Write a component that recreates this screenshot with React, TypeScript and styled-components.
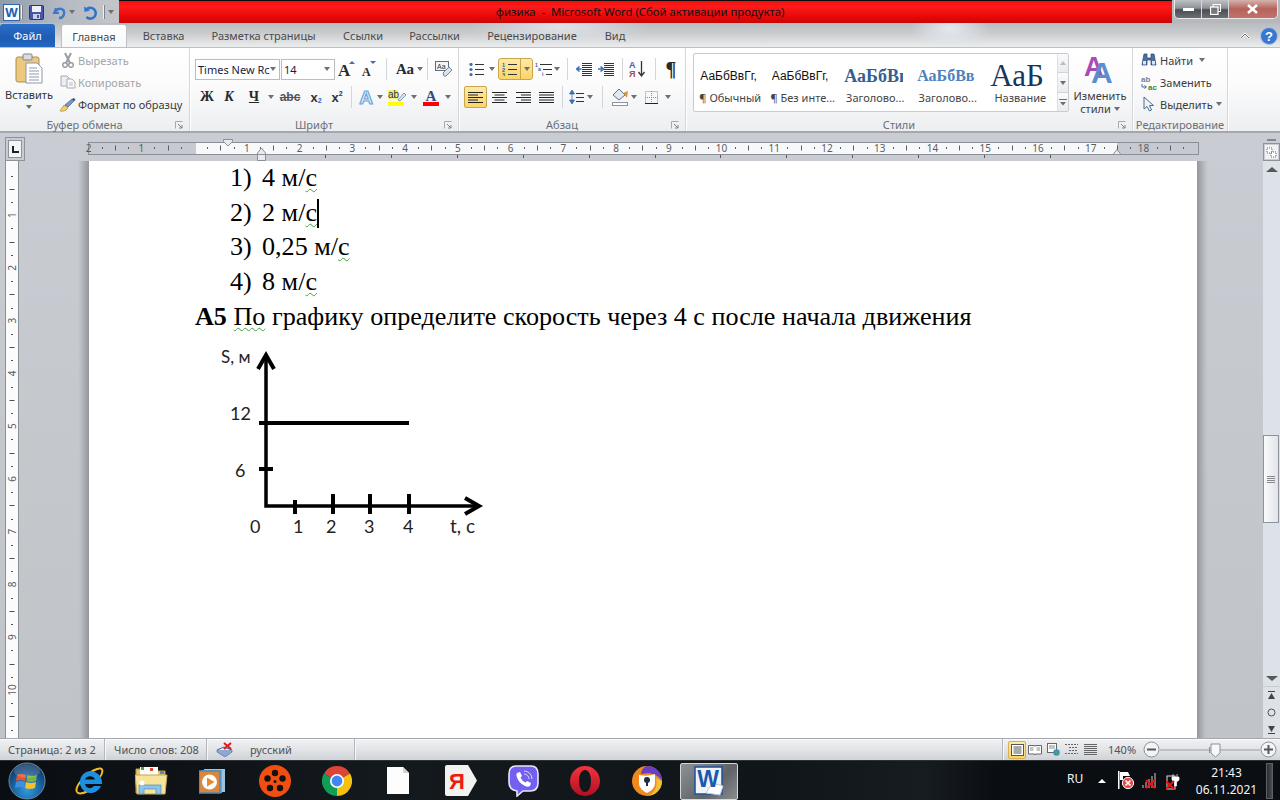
import React from 'react';
import styled, { createGlobalStyle } from 'styled-components';

const Global = createGlobalStyle`
  html, body { margin: 0; padding: 0; width: 1280px; height: 800px; overflow: hidden; background: #c8ccd2; }
  * { box-sizing: border-box; }
  #root { width: 1280px; height: 800px; }
`;

const UI = `"Noto Sans", "Open Sans", sans-serif`;

const Window = styled.div`
  width: 1280px; height: 800px; display: flex; flex-direction: column; overflow: hidden;
  font-family: ${UI}; font-size: 11px; color: #3b3b3b;
`;

/* ---------- title ---------- */
const TitleBar = styled.div`
  height: 23px; display: flex; flex: none;
  background: linear-gradient(90deg, #8f9cad 0, #b4bac2 60px, #c4c6c9 119px, #b5b7ba 100%);
`;
const Qat = styled.div`width: 119px; display: flex; align-items: center; padding: 1px 0 0 2px;`;
const QatCell = styled.div<{ $w: number }>`width: ${p => p.$w}px; display: flex; justify-content: center; align-items: center;`;
const QatSep = styled.div`width: 1px; height: 14px; background: #eef0f2; box-shadow: 1px 0 #7c828a;`;
const RedBand = styled.div`
  width: 1053px; height: 23px; border-top: 1px solid #0b0b0b;
  background: linear-gradient(#f40f0f, #ff1a1a 25%, #e80808 70%, #c90606);
  color: #111; font-size: 11.3px; display: flex; align-items: center; justify-content: center; padding: 0 11px 2px 0;
  white-space: pre;
`;
const WinControls = styled.div`
  margin-left: 2px; width: 104px; height: 19px; display: flex; border: 1px solid #e8e9ea; border-top: 0;
  border-radius: 0 0 5px 5px; overflow: hidden;
`;
const WinBtn = styled.div<{ $w: number; $close?: boolean }>`
  width: ${p => p.$w}px; display: flex; align-items: center; justify-content: center;
  border-right: 1px solid #d8d9da;
  background: ${p => p.$close
    ? 'linear-gradient(#d4b3ad, #b5625a 50%, #c3726a)'
    : 'linear-gradient(#bfc2c5, #8d9195 45%, #4a4e52 55%, #6c7074)'};
  &:last-child { border-right: 0; }
`;

/* ---------- tabs ---------- */
const TabRow = styled.div`
  height: 24px; flex: none; display: flex; align-items: stretch; padding-top: 1px; color: #4a4a4a;
  background:
    radial-gradient(ellipse 40px 22px at 950px 6px, #e4e9f0, transparent),
    radial-gradient(ellipse 90px 20px at 560px 4px, #dfe2e8, transparent),
    linear-gradient(#b9bcbf, #c8cacc 40%, #eceded);
`;
const FileTab = styled.div`
  width: 55px; background: linear-gradient(#2a6ec8, #1d5cb4 60%, #2368c0); color: #fff;
  border-radius: 3px 3px 0 0; display: flex; align-items: center; justify-content: center;
`;
const ActiveTab = styled.div`
  width: 66px; margin-left: 6px; background: linear-gradient(#fff, #f7f8f9); border: 1px solid #bcc0c4; border-bottom: 0;
  border-radius: 3px 3px 0 0; display: flex; align-items: center; justify-content: center;
`;
const Tab = styled.div<{ $w: number }>`width: ${p => p.$w}px; display: flex; align-items: center; justify-content: center;`;
const TabEnd = styled.div`margin-left: auto; display: flex; align-items: center; gap: 10px; padding-right: 2px;`;

/* ---------- ribbon ---------- */
const Ribbon = styled.div`
  height: 86px; flex: none; display: flex; border-top: 1px solid #bcc0c4; border-bottom: 2px solid #a4a8ad;
  background: linear-gradient(#fff, #fbfbfc 45%, #eceef0);
`;
const Group = styled.div<{ $w: number }>`
  width: ${p => p.$w}px; height: 83px; border-right: 1px solid #d4d6d9; display: flex; flex-direction: column;
  box-shadow: 1px 0 #fff;
`;
const GroupBody = styled.div<{ $top: number; $left?: number }>`
  height: 71px; padding-top: ${p => p.$top}px; padding-left: ${p => p.$left || 0}px; display: flex;
`;
const GroupLabel = styled.div`height: 12px; display: flex; align-items: center; color: #6a7078; margin-top: 0;`;
const GroupTitle = styled.div`flex: 1; text-align: center; line-height: 12px; white-space: nowrap;`;
const Launcher = styled.svg`width: 8px; height: 8px; margin: 0 6px; flex: none;`;

const PasteCol = styled.div`width: 58px; display: flex; flex-direction: column; align-items: center; padding-top: 4px;`;
const PasteText = styled.div`line-height: 14px; margin: 4px 0 3px; color: #333;`;
const ClipCol = styled.div`display: flex; flex-direction: column;`;
const ActionRow = styled.div<{ $off?: boolean }>`
  height: 22px; display: flex; align-items: center; white-space: nowrap;
  color: ${p => p.$off ? '#a3a6a9' : '#3b3b3b'};
`;
const ActionIcon = styled.div<{ $w: number }>`width: ${p => p.$w}px; display: flex; justify-content: center; flex: none;`;
const Caret = styled.span<{ $up?: boolean; $faint?: boolean }>`
  display: inline-block; width: 0; height: 0; border: 3px solid transparent; flex: none;
  ${p => p.$up ? 'border-bottom: 4px solid #6c6f73; border-top: 0;' : 'border-top: 4px solid #6c6f73; border-bottom: 0;'}
  opacity: ${p => p.$faint ? .4 : 1};
`;
const RowStack = styled.div`display: flex; flex-direction: column; gap: 6px;`;
const ToolRow = styled.div<{ $left?: number }>`height: 22px; display: flex; align-items: center; margin-left: ${p => p.$left || 0}px;`;
const Tool = styled.div<{ $w: number; $on?: boolean }>`
  width: ${p => p.$w}px; height: 22px; display: flex; align-items: center; justify-content: center; flex: none;
  ${p => p.$on ? 'background: linear-gradient(#fde9a8, #fbd568); border: 1px solid #c9a54b; border-radius: 2px;' : ''}
`;
const ToolSep = styled.div<{ $w: number }>`
  width: ${p => p.$w}px; height: 22px; flex: none; display: flex; justify-content: center;
  &::after { content: ''; width: 1px; background: #d3d5d8; }
`;
const SplitTool = styled.div`
  width: 35px; height: 22px; display: flex; border: 1px solid #c9a54b; border-radius: 3px; flex: none; margin-left: 2px;
  background: linear-gradient(#fde9a8, #fbd568);
`;
const SplitMain = styled.div`width: 22px; display: flex; align-items: center; justify-content: center; border-right: 1px solid #c9a54b;`;
const SplitArrow = styled.div`flex: 1; display: flex; align-items: center; justify-content: center;`;

const FontBox = styled.div<{ $w: number }>`
  width: ${p => p.$w}px; height: 21px; border: 1px solid #b9bdc2; background: #fff; display: flex; align-items: center;
  justify-content: space-between; padding: 0 4px 0 2px; flex: none; margin-right: 1px; color: #1c1c3c; white-space: nowrap;
`;
const Serif = styled.span<{ $s: number; $i?: boolean; $u?: boolean; $c?: string; $w?: number }>`
  font-family: "Liberation Serif", serif; font-size: ${p => p.$s}px; font-weight: ${p => p.$w ?? 700}; line-height: 1;
  font-style: ${p => p.$i ? 'italic' : 'normal'}; color: ${p => p.$c || '#2a2a2a'};
  text-decoration: ${p => p.$u ? 'underline' : 'none'};
`;
const Mini = styled.span`
  font-size: 13px; font-weight: 700; color: #333; font-family: "Liberation Sans", sans-serif; display: inline-flex; align-items: baseline;
  line-height: 1;
`;
const MiniIdx = styled.span<{ $up?: boolean }>`font-size: 7px; color: ${p => p.$up ? '#333' : '#3566b0'}; position: relative; top: ${p => p.$up ? -6 : 1}px;`;
const Strike = styled.span`font-size: 12px; color: #555; text-decoration: line-through; font-family: "Liberation Sans", sans-serif; font-weight: 700;`;

const Gallery = styled.div`
  margin-left: 7px; width: 376px; height: 59px; display: flex; border: 1px solid #c8ccd1; border-radius: 2px; background: #fff; flex: none;
`;
const GalleryItem = styled.div`width: 72.5px; display: flex; flex-direction: column; align-items: center; padding-top: 6px;`;
const Sample = styled.div<{ $s: number; $c: string; $serif?: boolean; $b?: boolean; $w: number }>`
  height: 31px; width: ${p => p.$w}px; margin-left: -3px; overflow: hidden; white-space: nowrap; display: flex; align-items: center;
  font-size: ${p => p.$s}px; line-height: 1; color: ${p => p.$c};
  font-family: ${p => p.$serif ? '"Liberation Serif", serif' : '"Liberation Sans", sans-serif'};
  font-weight: ${p => p.$b ? 700 : 400};
`;
const SampleLabel = styled.div`line-height: 14px; white-space: nowrap; color: #444;`;
const GalleryScroll = styled.div`flex: 1; display: flex; flex-direction: column; border-left: 1px solid #dcdfe3;`;
const GalleryBtn = styled.div<{ $h: number }>`
  height: ${p => p.$h}px; display: flex; align-items: center; justify-content: center;
  background: linear-gradient(#fbfbfc, #e9ebee); border-bottom: 1px solid #d0d3d7;
  &:last-child { border-bottom: 0; }
`;
const ChangeStyles = styled.div`
  margin-left: 1px; width: 60px; display: flex; flex-direction: column; align-items: center; padding-top: 2px; line-height: 13px; color: #3b3b3b;
`;
const ChangeText = styled.div`margin-top: 6px; text-align: center; white-space: nowrap;`;
const ChangeLine = styled.div`display: flex; align-items: center; justify-content: center; gap: 3px;`;

/* ---------- work area ---------- */
const Work = styled.div`flex: 1; min-height: 0; display: flex; background: linear-gradient(#c9ccd2, #c0c3c7);`;
const Rail = styled.div`width: 25px; flex: none; display: flex; flex-direction: column; padding: 4px 0 0 5px;`;
const TabStop = styled.div`
  width: 20px; height: 24px; flex: none; padding: 2px;
  border: 1px solid #8e9399; display: flex;
`;
const TabStopInner = styled.div`flex: 1; background: #f4f5f7; border: 1px solid #8e9399; display: flex; align-items: center; justify-content: center;`;
const Center = styled.div`flex: 1; display: flex; flex-direction: column; min-width: 0;`;
const RulerBand = styled.svg`display: block; flex: none;`;
const PageRow = styled.div`flex: 1; display: flex; min-height: 0;`;
const Gutter = styled.div<{ $left?: boolean; $w: number }>`
  width: ${p => p.$w}px; flex: none;
  background: ${p => p.$left
    ? 'linear-gradient(90deg, transparent calc(100% - 11px), #bfc2c6 calc(100% - 9px), #93969c 100%)'
    : 'linear-gradient(90deg, #93969c 0, #bcbfc4 8px, transparent 11px)'};
`;
const Page = styled.div`
  width: 1108px; background: #fff; padding-left: 106px; overflow: hidden; color: #000;
  font-family: "Liberation Serif", "Times New Roman", serif; font-size: 26.13px;
`;
const Line = styled.div<{ $ind?: boolean }>`
  height: 34.7px; line-height: 34.7px; white-space: pre; display: flex;
  padding-left: ${p => p.$ind ? 35 : 0}px;
`;
const Num = styled.span`width: 32px; flex: none;`;
const Spell = styled.span`
  text-decoration: underline wavy #3fa33f 1px; text-underline-offset: 2px; text-decoration-skip-ink: none;
`;
const TextCursor = styled.span`display: inline-block; width: 2px; height: 29px; background: #000; align-self: center;`;
const Chart = styled.svg`display: block; margin: 5.5px 0 0 -5px;`;

const ScrollCol = styled.div`width: 17px; flex: none; display: flex; flex-direction: column; background: #dde1e8;`;
const Splitter = styled.div`
  height: 10px; background: #c9ccd2; display: flex; align-items: flex-end; justify-content: center; padding-bottom: 2px;
  &::after { content: ''; width: 9px; height: 2px; background: #85898f; }
`;
const ViewRuler = styled.div`height: 18px; background: #c9ccd2; border: 1px solid #8e9399; padding: 1px; display: flex;`;
const ViewRulerIn = styled.div`flex: 1; background: #f1f2f4; display: flex; align-items: center; justify-content: center;`;
const ScrollBtn = styled.div<{ $h: number; $line?: boolean }>`
  height: ${p => p.$h}px; flex: none; display: flex; align-items: center; justify-content: center;
  ${p => p.$line ? 'border-bottom: 1px solid #c9cdd4;' : ''}
`;
const Track = styled.div`flex: 1; min-height: 0; padding-top: 257px;`;
const Thumb = styled.div`
  width: 16px; height: 88px; border: 1px solid #8e9399; background: linear-gradient(90deg, #fafbfc, #e0e3e9);
  display: flex; align-items: center; justify-content: center;
`;
const Arrow = styled.span<{ $down?: boolean }>`
  width: 0; height: 0; border-left: 6px solid transparent; border-right: 6px solid transparent;
  ${p => p.$down ? 'border-top: 5px solid #55585c;' : 'border-bottom: 5px solid #55585c;'}
`;

/* ---------- status ---------- */
const Status = styled.div`
  height: 22px; flex: none; display: flex; align-items: center; color: #4e5258; border-top: 1px solid #a3a6aa;
  background: linear-gradient(#f0f1f3, #e2e4e7 50%, #cfd2d7);
  box-shadow: inset 0 1px #fbfbfc;
`;
const StatusCell = styled.div<{ $w: number; $pad: number }>`
  width: ${p => p.$w}px; height: 100%; padding-left: ${p => p.$pad}px; display: flex; align-items: center; flex: none;
  border-right: 1px solid #b3b6ba; box-shadow: 1px 0 #f8f8f9; white-space: nowrap;
`;
const LangText = styled.span`margin-left: 17px;`;
const StatusRight = styled.div`margin-left: auto; display: flex; align-items: center; height: 100%; padding-right: 3px;`;
const ViewSep = styled.div`width: 1px; height: 100%; background: #b3b6ba; margin-right: 5px; box-shadow: 1px 0 #f8f8f9;`;
const ViewBtn = styled.div<{ $w: number; $on?: boolean }>`
  width: ${p => p.$w}px; height: 18px; display: flex; align-items: center; justify-content: center;
  ${p => p.$on ? 'background: linear-gradient(#fdeaa8, #fbd467); border: 1px solid #d8b04e; border-radius: 2px;' : ''}
`;
const ZoomText = styled.div`width: 43px; padding-left: 8px; font-size: 11px;`;

/* ---------- taskbar ---------- */
const Taskbar = styled.div`
  height: 40px; flex: none; display: flex; align-items: center; color: #f2f4f6;
  background: linear-gradient(90deg, #0a0d11, #14191e 30%, #10151a 60%, #171c20 72%, #0a0e12 78%, #0b0f13);
  border-top: 1px solid #2d3135;
`;
const TaskIcon = styled.div<{ $gap: number; $w: number }>`
  margin-left: ${p => p.$gap}px; width: ${p => p.$w}px; flex: none; display: flex; align-items: center; justify-content: center;
`;
const ActiveTask = styled.div`
  margin-left: 18px; width: 58px; height: 37px; margin-top: 1px; flex: none; display: flex; align-items: center; justify-content: center;
  border: 1px solid #d4d6d8; border-radius: 2px; background: linear-gradient(135deg, #8f9295, #5f6367 60%, #8a8d90);
`;
const Tray = styled.div`margin-left: auto; display: flex; align-items: center; height: 100%;`;
const TrayLang = styled.div`font-size: 12px; width: 24px; margin-top: -5px;`;
const TrayIcon = styled.div<{ $w: number }>`width: ${p => p.$w}px; display: flex; justify-content: center;`;
const TrayArrow = styled.span`width: 0; height: 0; border-left: 4px solid transparent; border-right: 4px solid transparent; border-bottom: 4px solid #fff;`;
const Clock = styled.div`width: 73px; margin-left: 5px; text-align: center; font-size: 12px; line-height: 17px;`;
const ShowDesktop = styled.div`
  width: 7px; height: 36px; margin: 0 7px 0 3px; border: 1px solid #5d6064; background: linear-gradient(90deg, #2a2e32, #4a4e52);
`;

/* ---------- icons ---------- */
const IconSvg = styled.svg`display: block; flex: none;`;
const S = ({ w, h, children, vb }: { w: number; h: number; vb?: string; children: React.ReactNode }) => (
  <IconSvg width={w} height={h} viewBox={vb || `0 0 ${w} ${h}`}>{children}</IconSvg>
);

const WordMark = ({ size }: { size: number }) => (
  <S w={size} h={size} vb="0 0 18 18">
    <rect x=".5" y=".5" width="17" height="17" fill="#f6f9fd" stroke="#2a5ea8" />
    <text x="9" y="14" textAnchor="middle" fontFamily="Liberation Sans" fontWeight="700" fontSize="14" fill="#1b5db3">W</text>
  </S>
);
const SaveIcon = () => (
  <S w={15} h={15}><rect x=".5" y=".5" width="14" height="14" rx="1" fill="#4b55a8" stroke="#2d3372" /><rect x="3" y="1" width="9" height="6" fill="#eef1f8" /><rect x="4" y="9" width="7" height="5" fill="#c8cfe0" /><rect x="8" y="10" width="2" height="3" fill="#4b55a8" /></S>
);
const UndoIcon = () => (
  <S w={15} h={15}><path d="M4 3 L2 8 L7 8" fill="none" stroke="#3d78c9" strokeWidth="2" /><path d="M3 7 C6 2 13 3 12 9 C11.5 12 9 13 7 13" fill="none" stroke="#3d78c9" strokeWidth="2.4" /></S>
);
const RedoIcon = () => (
  <S w={15} h={15}><path d="M3.5 12 A5.4 5.4 0 1 0 3 5" fill="none" stroke="#2f74cc" strokeWidth="2.6" /><path d="M1 1.5 L1.5 7 L7 5.5Z" fill="#2f74cc" /></S>
);
const PasteIcon = () => (
  <S w={28} h={31}>
    <rect x="1" y="4" width="23" height="25" rx="2" fill="#edc87f" stroke="#b08d4c" />
    <rect x="8" y="1" width="9" height="6" rx="1" fill="#d8dde2" stroke="#7d8690" />
    <path d="M11 10 H22 L27 15 V30 H11Z" fill="#fff" stroke="#8f98a3" />
    <path d="M14 15H22M14 18H24M14 21H24M14 24H24M14 27H24" stroke="#8d9aac" />
  </S>
);
const ScissorsIcon = () => (
  <S w={14} h={16}>
    <path d="M4 1 L9 11 M10 1 L5 11" stroke="#9a9da1" strokeWidth="2" /><circle cx="4" cy="13" r="2.3" fill="none" stroke="#9a9da1" strokeWidth="1.5" /><circle cx="10" cy="13" r="2.3" fill="none" stroke="#9a9da1" strokeWidth="1.5" />
  </S>
);
const CopyIcon = () => (
  <S w={16} h={14}>
    <path d="M1 1H7L9 3V11H1Z" fill="#eceef0" stroke="#a7abb0" /><path d="M7 4H12L15 7V13H7Z" fill="#fafafa" stroke="#a7abb0" /><path d="M9 8H13M9 10H13" stroke="#b8bcc2" />
  </S>
);
const BrushIcon = () => (
  <S w={18} h={15}>
    <path d="M1 14 L5 8 L9 11 C7 14 4 14.5 1 14Z" fill="#f2d06c" stroke="#a8873a" strokeWidth=".7" />
    <path d="M6 8 L13 2 L15 4 L9 10Z" fill="#7f96c0" stroke="#3f5a8a" strokeWidth=".7" />
    <path d="M13 2 L15 1 L16.5 3 L15 4Z" fill="#36496e" />
  </S>
);
const BiggerA = ({ up }: { up?: boolean }) => (
  <S w={18} h={18}>
    <text x={up ? 0 : 2} y={16} fontFamily="Liberation Serif" fontWeight="700" fontSize={up ? 17 : 12} fill="#2a2a2a">А</text>
    <path d={up ? 'M11 4 L17 4 L14 1Z' : 'M10 1 L16 1 L13 4Z'} fill="#3f6fb2" />
  </S>
);
const ClearIcon = () => (
  <S w={18} h={16}>
    <rect x=".5" y=".5" width="13" height="9" fill="#f2f5fa" stroke="#5e6b80" />
    <text x="2" y="8" fontFamily="Liberation Sans" fontSize="7" fill="#333">Aa</text>
    <path d="M8 12 L14 6 L17 9 L11 15 H9Z" fill="#d9e3f3" stroke="#6e87ad" />
  </S>
);
const EffectA = () => (
  <S w={20} h={20}>
    <text x="10" y="17" textAnchor="middle" fontFamily="Liberation Sans" fontWeight="700" fontSize="19" fill="#dcecfa" stroke="#69a8dd" strokeWidth="1.2">A</text>
  </S>
);
const HighlightIcon = () => (
  <S w={18} h={17}>
    <rect x="0" y="1" width="10" height="9" fill="#f0ee82" />
    <text x="0" y="9" fontFamily="Liberation Sans" fontSize="10" fill="#333">ab</text>
    <path d="M10 11 L16 4 L18 6 L12 12Z" fill="#dfe7f3" stroke="#6a7c99" strokeWidth=".8" />
    <rect x="0" y="13" width="16" height="4" fill="#ffff00" />
  </S>
);
const ColorA = () => (
  <S w={16} h={17}>
    <text x="8" y="12" textAnchor="middle" fontFamily="Liberation Serif" fontWeight="700" fontSize="15" fill="#2c4d85">A</text>
    <rect x="0" y="13" width="16" height="4" fill="#ff0000" />
  </S>
);
const Lines = ({ w, ys, xs }: { w: number; ys: number[]; xs?: number[] }) => (
  <>{ys.map((y, i) => <rect key={i} x={xs ? xs[i] : 0} y={y} width={xs ? w - xs[i] : w} height="1" fill="#333" />)}</>
);
const BulletsIcon = () => (
  <S w={15} h={13}>
    {[1.5, 6.5, 11.5].map(y => <circle key={y} cx="2" cy={y} r="1.6" fill="#3e6db3" />)}
    <Lines w={15} ys={[1, 6, 11]} xs={[6, 6, 6]} />
  </S>
);
const NumberedIcon = () => (
  <S w={15} h={14}>
    {['1', '2', '3'].map((t, i) => <text key={t} x="0" y={4.5 + i * 5} fontFamily="Liberation Sans" fontWeight="700" fontSize="5.5" fill="#2e5da0">{t}</text>)}
    <Lines w={15} ys={[2, 7, 12]} xs={[6, 6, 6]} />
  </S>
);
const MultiIcon = () => (
  <S w={17} h={15}>
    <text x="0" y="5" fontFamily="Liberation Sans" fontWeight="700" fontSize="5" fill="#2e5da0">1</text>
    <text x="3" y="9" fontFamily="Liberation Sans" fontWeight="700" fontSize="5" fill="#2e5da0">a</text>
    <text x="7" y="14" fontFamily="Liberation Sans" fontWeight="700" fontSize="5" fill="#2e5da0">i</text>
    <Lines w={17} ys={[2, 7, 12]} xs={[5, 8, 11]} />
  </S>
);
const IndentIcon = ({ more }: { more?: boolean }) => (
  <S w={16} h={14}>
    <Lines w={16} ys={[1, 3, 5, 7, 9, 11, 13]} xs={[6, 6, 6, 6, 6, 6, 6]} />
    <path d={more ? 'M0 7H4M2.5 4.5L5.5 7L2.5 9.5' : 'M5.5 7H1.5M3.5 4.5L.5 7L3.5 9.5'} fill="none" stroke="#3e6db3" strokeWidth="1.6" />
  </S>
);
const SortIcon = () => (
  <S w={17} h={18}>
    <text x="0" y="8" fontFamily="Liberation Sans" fontWeight="700" fontSize="9" fill="#3665ae">А</text>
    <text x="0" y="17" fontFamily="Liberation Sans" fontWeight="700" fontSize="9" fill="#a34f4a">Я</text>
    <path d="M12.5 1V15M9.5 12L12.5 16L15.5 12" fill="none" stroke="#333" strokeWidth="1.3" />
  </S>
);
const AlignIcon = ({ k }: { k: 'l' | 'c' | 'r' | 'j' }) => {
  const ws = k === 'j' ? [15, 15, 15, 15, 15] : [15, 10, 15, 10, 15];
  return (
    <S w={15} h={11}>
      {ws.map((w, i) => <rect key={i} x={k === 'l' || k === 'j' ? 0 : k === 'c' ? (15 - w) / 2 : 15 - w} y={i * 2.5} width={w} height="1" fill="#222" />)}
    </S>
  );
};
const SpacingIcon = () => (
  <S w={15} h={16}>
    <path d="M3 1 L.5 5H5.5Z M3 15 L.5 11H5.5Z M3 4V12" fill="#3e6db3" stroke="#3e6db3" strokeWidth=".8" />
    <Lines w={15} ys={[4, 8, 12]} xs={[7, 7, 7]} />
  </S>
);
const ShadeIcon = () => (
  <S w={16} h={18}>
    <path d="M7 1 L13 7 L7 12 L1 7Z" fill="#e4e9f0" stroke="#5c7193" />
    <path d="M11 5 L16 3 L15 10 L13 7Z" fill="#e0942c" />
    <rect x=".5" y="14.5" width="15" height="3" fill="#fff" stroke="#8e9399" />
  </S>
);
const BordersIcon = () => (
  <S w={13} h={13}>
    <rect x=".5" y=".5" width="12" height="12" fill="none" stroke="#8c9096" strokeDasharray="1 1" />
    <path d="M6.5 0V13M0 6.5H13" stroke="#8c9096" strokeDasharray="1 1" />
    <path d="M0 12.5H13" stroke="#222" />
  </S>
);
const ChangeIcon = () => (
  <S w={32} h={28}>
    <text x="0" y="21" fontFamily="Liberation Sans" fontWeight="700" fontSize="27" fill="#a64db5">A</text>
    <text x="7" y="27.5" fontFamily="Liberation Sans" fontWeight="700" fontSize="30" fill="#5c8dcd">A</text>
  </S>
);
const BinocIcon = () => (
  <S w={16} h={14}>
    <path d="M3 1h3v4h4V1h3l2 11h-5V7H6v5H1Z" fill="#4a6fa5" stroke="#27426e" strokeWidth=".7" />
    <rect x="2" y="8" width="3" height="3.5" fill="#dbe6f5" /><rect x="11" y="8" width="3" height="3.5" fill="#dbe6f5" />
  </S>
);
const ReplaceIcon = () => (
  <S w={17} h={15}>
    <text x="0" y="7" fontFamily="Liberation Sans" fontWeight="700" fontSize="8" fill="#7c7f84">ab</text>
    <text x="7" y="14.5" fontFamily="Liberation Sans" fontWeight="700" fontSize="8" fill="#2e8b30">ac</text>
    <path d="M1 9 V12 H5M3.5 10.5L5.5 12L3.5 13.5" fill="none" stroke="#3e6db3" />
  </S>
);
const CursorIcon = () => (
  <S w={12} h={16}>
    <path d="M1 1 L1 13 L4 10.5 L6.5 15 L8.5 14 L6.5 9.5 L10.5 9.5Z" fill="#eef3fa" stroke="#53698d" />
  </S>
);
const Launch = () => (
  <Launcher viewBox="0 0 8 8"><path d="M.5 7.5V.5H7.5" fill="none" stroke="#a7abb0" /><path d="M3 3L7 7M7 4V7H4" fill="none" stroke="#7f8489" /></Launcher>
);

const HorizontalRuler = () => {
  const U = 52.75, Z = 194;
  const items: React.ReactNode[] = [];
  for (let n = -3; n <= 18; n++) {
    const x = Z + U * n;
    if (n !== 0 && x > 80) {
      items.push(<text key={`n${n}`} x={x} y={152} textAnchor="middle" fontFamily="Noto Sans" fontSize="10" fill="#5a5d61">{Math.abs(n)}</text>);
    }
    [[.25, 2], [.5, 5], [.75, 2]].forEach(([f, h]) => {
      const tx = x + U * f;
      if (tx > 90 && tx < 1197) items.push(<rect key={`t${n}${f}`} x={Math.round(tx)} y={148 - h / 2} width="1" height={h} fill="#5a5d61" />);
    });
  }
  for (let k = 0; k < 12; k++) items.push(<rect key={`m${k}`} x={Math.round(325 + 65.9 * k)} y={155} width="1" height="3" fill="#55585c" />);
  return (
    <RulerBand width={1238} height={28} viewBox="25 133 1238 28">
      <rect x="88.5" y="142.5" width="1110" height="12" fill="#c6cad0" stroke="#8b9096" />
      <rect x="196" y="143" width="921" height="11" fill="#f7f8f9" />
      {items}
      <path d="M223.5 139.5H232.5V141.5L228 146L223.5 141.5Z" fill="#e9eaec" stroke="#8b9096" />
      <path d="M257.5 153 L261.5 148 L265.5 153 V160.5 H257.5Z" fill="#e9eaec" stroke="#8b9096" />
      <path d="M257.5 154.5H265.5" stroke="#8b9096" />
      <path d="M1113 154.5 L1117 149.5 L1121 154.5Z" fill="#e9eaec" stroke="#8b9096" />
    </RulerBand>
  );
};

const VerticalRuler = () => {
  const U = 52.75, Z = 162.5;
  const items: React.ReactNode[] = [];
  for (let n = 0; n <= 11; n++) {
    const y = Z + U * n;
    if (n > 0 && y < 730) {
      items.push(<text key={`n${n}`} x={0} y={0} transform={`translate(16 ${y}) rotate(-90)`} textAnchor="middle" fontFamily="Noto Sans" fontSize="10" fill="#5a5d61">{n}</text>);
    }
    [[.25, 2], [.5, 5], [.75, 2]].forEach(([f, w]) => {
      const ty = y + U * f;
      if (ty < 737) items.push(<rect key={`t${n}${f}`} x={12 - w / 2} y={Math.round(ty)} width={w} height="1" fill="#4d5054" />);
    });
  }
  return (
    <RulerBand width={15} height={577} viewBox="5 161 15 577">
      <rect x="5.5" y="160" width="13" height="579" fill="#fbfbfc" stroke="#8b9096" />
      {items}
    </RulerBand>
  );
};

const Graph = () => {
  const lbl = { fontFamily: 'Lato, sans-serif', fontSize: 18, fill: '#222' } as const;
  return (
    <Chart width={300} height={200} viewBox="190 340 300 200">
      <g fill="none" stroke="#000" strokeWidth="4">
        <path d="M266 355V506H478" strokeWidth="3.5" />
        <path d="M258 369L266 355L274 369" strokeLinejoin="miter" />
        <path d="M465 498L479 506L465 514" />
        <path d="M259 423H409" />
        <path d="M259 469H273" />
        <path d="M295 500V514M333 494V514M370 494V514M409 494V514" />
      </g>
      <text x="221" y="363" {...lbl} fontSize={17}>S, м</text>
      <text x="230" y="420" {...lbl}>12</text>
      <text x="235" y="477" {...lbl}>6</text>
      <text x="250" y="533" {...lbl}>0</text>
      <text x="293" y="533" {...lbl}>1</text>
      <text x="326" y="533" {...lbl}>2</text>
      <text x="364" y="533" {...lbl}>3</text>
      <text x="403" y="533" {...lbl}>4</text>
      <text x="450" y="533" {...lbl} fontSize={19}>t, с</text>
    </Chart>
  );
};

/* --- taskbar logos --- */
const Orb = () => (
  <S w={38} h={38}>
    <defs>
      <radialGradient id="orb" cx=".5" cy=".75" r=".8"><stop offset="0" stopColor="#2f9be0" /><stop offset=".6" stopColor="#17558f" /><stop offset="1" stopColor="#0c2a4c" /></radialGradient>
    </defs>
    <circle cx="19" cy="19" r="18" fill="url(#orb)" stroke="#6f8aa6" />
    <path d="M9 13 Q13 11 18 13 L17 19 Q13 17 8 19Z" fill="#e8532b" />
    <path d="M19.5 13 Q24 15 29 13 L28 19 Q23 21 18.5 19Z" fill="#7cb23a" />
    <path d="M8 20 Q12 18 17 20 L16 26 Q12 24 7 26Z" fill="#3f8fde" />
    <path d="M18 20 Q23 22 28 20 L27 26 Q22 28 17 26Z" fill="#f2c22e" />
    <ellipse cx="19" cy="9" rx="13" ry="7" fill="#fff" opacity=".16" />
  </S>
);
const IE = () => (
  <S w={30} h={30}>
    <path d="M3 26 C0 21 12 7 23 3 C29 1 30 5 26 11" fill="none" stroke="#f2bb2a" strokeWidth="2" />
    <path d="M3 26 C5 29 10 27 14 25" fill="none" stroke="#f2bb2a" strokeWidth="2" />
    <path d="M16 5 A11 11 0 1 0 27 20 H20 A5 5 0 0 1 11 18 H28 A12 12 0 0 0 16 5Z M11 13.5 A5.5 5.5 0 0 1 21 13.5Z" fill="#1d8fe0" fillRule="evenodd" />
  </S>
);
const FolderIcon = () => (
  <S w={33} h={29}>
    <path d="M1 3 H12 L14 5 H30 V27 H1Z" fill="#e8c86c" stroke="#b89a48" />
    <rect x="5" y="1" width="18" height="8" fill="#fdfdf6" /><rect x="6" y="1" width="3" height="3" fill="#4ba04a" /><rect x="15" y="2" width="3" height="3" fill="#cf4a3a" /><rect x="25" y="5" width="4" height="3" fill="#4a90d0" />
    <path d="M0 9 H32 L30 28 H2Z" fill="#f6e39c" stroke="#c4a552" />
    <path d="M4 19 H26 V28 H21 V23 H9 V28 H4Z" fill="#8cc3e8" stroke="#4f8dbd" strokeWidth=".7" />
    <circle cx="7" cy="17" r="2.5" fill="#fff" opacity=".9" />
  </S>
);
const Wmp = () => (
  <S w={26} h={26}>
    <rect x="5" y="1" width="21" height="23" fill="#9cc3df" />
    <rect x="2" y="2" width="21" height="23" fill="#6fa9d2" />
    <rect x="0" y="3" width="21" height="22" fill="#d9863f" stroke="#4f88b4" strokeWidth="1.5" />
    <circle cx="10.5" cy="14" r="7.5" fill="#fff" />
    <path d="M8 9.5 L15.5 14 L8 18.5Z" fill="#e98a2a" />
  </S>
);
const FilmIcon = () => (
  <S w={32} h={32}>
    <circle cx="16" cy="16" r="16" fill="#f04e12" />
    {[[16, 8], [8.5, 13.5], [23.5, 13.5], [11, 23], [21, 23]].map(([x, y], i) => <circle key={i} cx={x} cy={y} r="3.2" fill="#15110f" />)}
    <circle cx="16" cy="16.5" r="1.5" fill="#15110f" />
  </S>
);
const ChromeIcon = () => (
  <S w={30} h={30}>
    <path d="M15 15 L2 7.5 A15 15 0 0 1 28 7.5Z" fill="#db4437" />
    <path d="M15 15 L28 7.5 A15 15 0 0 1 15 30Z" fill="#f4c20d" />
    <path d="M15 15 L15 30 A15 15 0 0 1 2 7.5Z" fill="#0f9d58" />
    <circle cx="15" cy="15" r="7" fill="#fff" /><circle cx="15" cy="15" r="5.4" fill="#4285f4" />
  </S>
);
const DocIcon = () => (
  <S w={22} h={27}><path d="M0 0 H16 L22 6 V27 H0Z" fill="#fdfdfd" /><path d="M16 0 V6 H22Z" fill="#cfd2d6" /></S>
);
const Yandex = () => (
  <S w={32} h={31}>
    <path d="M2 0 H23 L32 15.5 L23 31 H2 Q0 31 0 29 V2 Q0 0 2 0Z" fill="#f2f2f0" />
    <text x="12" y="24" textAnchor="middle" fontFamily="Liberation Sans" fontWeight="700" fontSize="22" fill="#f01a10">Я</text>
  </S>
);
const Viber = () => (
  <S w={31} h={32}>
    <path d="M8 1 H23 Q30 1 30 9 V18 Q30 26 22 26 H15 L9 31 V26 Q1 25 1 17 V9 Q1 1 8 1Z" fill="#7360f2" stroke="#e9e6fb" strokeWidth="1.6" />
    <path d="M9 8 L12 7 L14 11 L12.5 12.5 Q14 16 17.5 17.5 L19 16 L23 18 L22 21 Q20 22.5 17 21 Q10 17.5 8.5 11 Q8 9 9 8Z" fill="#fff" />
    <path d="M16 6 A8 8 0 0 1 24 14 M16 9 A5 5 0 0 1 21 14" fill="none" stroke="#d9d3fb" strokeWidth="1" />
  </S>
);
const Opera = () => (
  <S w={30} h={30}>
    <defs><linearGradient id="op" x1="0" y1="0" x2="0" y2="1"><stop offset="0" stopColor="#f5333f" /><stop offset="1" stopColor="#b01020" /></linearGradient></defs>
    <path d="M15 0 A15 15 0 1 0 15 30 A15 15 0 1 0 15 0Z M15 4 C19 4 21 9 21 15 C21 21 19 26 15 26 C11 26 9 21 9 15 C9 9 11 4 15 4Z" fill="url(#op)" fillRule="evenodd" />
  </S>
);
const LockApp = () => (
  <S w={30} h={30}>
    <circle cx="15" cy="15" r="15" fill="#f08a1e" />
    <path d="M15 0 A15 15 0 0 1 30 15 C26 8 18 6 9 8 C9 5 11 1 15 0Z" fill="#6a3fc4" />
    <path d="M30 15 A15 15 0 0 1 15 30 C22 28 26 22 24 12Z" fill="#f2c13a" />
    <path d="M7 9 C12 10 18 10 23 8 V17 C23 22 19 25 15 27 C11 25 7 22 7 17Z" fill="#fff" />
    <circle cx="15" cy="14" r="3" fill="#1f2a44" /><rect x="14" y="15" width="2" height="5" fill="#1f2a44" />
  </S>
);
const BigWord = () => (
  <S w={30} h={30}>
    <rect x="1" y="1" width="27" height="27" fill="#eef3fa" stroke="#1f4f9a" strokeWidth="1.5" />
    <path d="M18 17 L29 20 L26 29 L12 27Z" fill="#fff" stroke="#bcc8d8" />
    <text x="14" y="21" textAnchor="middle" fontFamily="Liberation Sans" fontWeight="700" fontSize="23" fill="#1a58ad">W</text>
  </S>
);
const FlagTray = () => (
  <S w={16} h={19}>
    <rect x="0" y="0" width="1.5" height="18" fill="#fff" /><path d="M2 1 H10 L12 5 H5 V9 H2Z" fill="#fff" />
    <circle cx="10" cy="12" r="5.6" fill="#e34a4a" stroke="#fff" /><path d="M7.5 9.5L12.5 14.5M12.5 9.5L7.5 14.5" stroke="#fff" strokeWidth="1.6" />
  </S>
);
const SignalTray = () => (
  <S w={16} h={16}>
    {[0, 3, 6, 9, 12].map((x, i) => <rect key={x} x={x} y={12 - i * 3} width="2" height={3 + i * 3} fill="#6a6e72" />)}
    <path d="M4 7L13 15M13 7L4 15" stroke="#f01010" strokeWidth="2" />
  </S>
);
const PowerTray = () => (
  <S w={14} h={18}>
    <rect x="1" y="4" width="8" height="13" fill="none" stroke="#dfe1e3" />
    <path d="M7 2V5M11 2V5M6 5H13V8L10.5 10V14H8.5V10L6 8Z" fill="#fff" stroke="#fff" strokeWidth=".7" />
    <path d="M0 9L8 17M8 9L0 17" stroke="#f01010" strokeWidth="2" />
  </S>
);
const ViewIconPage = () => (
  <S w={13} h={12}><rect x=".5" y=".5" width="12" height="11" fill="#fff" stroke="#555" /><path d="M2.5 3H10.5M2.5 5H10.5M2.5 7H10.5M2.5 9H10.5" stroke="#555" /></S>
);
const ViewIconBook = () => (
  <S w={14} h={12}><path d="M.5 1.5H6.5L7 2.5L7.5 1.5H13.5V10H7.5L7 11L6.5 10H.5Z" fill="#fff" stroke="#666" /><path d="M2 4H5.5M2 6H5.5M8.5 4H12M8.5 6H12" stroke="#888" /></S>
);
const ViewIconWeb = () => (
  <S w={13} h={13}><rect x=".5" y=".5" width="9" height="9" fill="#fff" stroke="#666" /><path d="M2 3H8M2 5H8" stroke="#888" /><circle cx="9.5" cy="9.5" r="3.2" fill="#3d8fbf" /><path d="M8 8.5 L10 8 L11 10 L9 11.5Z" fill="#5ca744" /></S>
);
const ViewIconOutline = () => (
  <S w={13} h={11}><path d="M0 .5H13M4 3.5H13M4 6.5H13M0 9.5H13" stroke="#666" strokeDasharray="2 1" /></S>
);
const ViewIconDraft = () => (
  <S w={13} h={11}><path d="M0 .5H13M0 2.5H13M0 4.5H13M0 6.5H13M0 8.5H13M0 10.5H13" stroke="#666" /></S>
);
const SpellIcon = () => (
  <S w={17} h={15}>
    <path d="M1 8 L8 5 L16 8 L9 13Z" fill="#e8eef8" stroke="#3f5f9a" /><path d="M1 8 V10 L9 15 L16 10 V8" fill="#8fa8d0" stroke="#3f5f9a" strokeWidth=".6" />
    <path d="M8 1L15 7M15 1L8 7" stroke="#e01818" strokeWidth="2" />
  </S>
);
const ZoomCircle = ({ plus }: { plus?: boolean }) => (
  <S w={17} h={17}>
    <circle cx="8.5" cy="8.5" r="7.5" fill="#f3f4f6" stroke="#8b9096" />
    <path d={plus ? 'M4 8.5H13M8.5 4V13' : 'M4 8.5H13'} stroke="#55585c" strokeWidth="2" />
  </S>
);
const ZoomSlider = () => (
  <S w={100} h={18}>
    <rect x="0" y="8" width="100" height="2" fill="#bcc0c5" />
    <rect x="49" y="6" width="1" height="6" fill="#8b9096" />
    <path d="M51 3H60V12L55.5 16L51 12Z" fill="#f6f7f8" stroke="#8b9096" />
  </S>
);

const TABS: [string, number][] = [['Вставка', 73], ['Разметка страницы', 127], ['Ссылки', 72], ['Рассылки', 71], ['Рецензирование', 124], ['Вид', 42]];

export default function App() {
  return (
    <Window>
      <Global />
      <TitleBar>
        <Qat>
          <QatCell $w={19}><WordMark size={17} /></QatCell>
          <QatSep />
          <QatCell $w={29}><SaveIcon /></QatCell>
          <QatCell $w={16}><UndoIcon /></QatCell>
          <QatCell $w={10}><Caret /></QatCell>
          <QatCell $w={26}><RedoIcon /></QatCell>
          <QatSep />
          <QatCell $w={14}><Caret /></QatCell>
        </Qat>
        <RedBand>физика  -  Microsoft Word (Сбой активации продукта)</RedBand>
        <WinControls>
          <WinBtn $w={28}><S w={11} h={4}><rect width="11" height="3" y="1" fill="#fff" /></S></WinBtn>
          <WinBtn $w={27}><S w={11} h={11}><rect x="3" y=".5" width="7.5" height="7" fill="none" stroke="#fff" /><rect x=".5" y="3" width="7.5" height="7.5" fill="#777" stroke="#fff" strokeWidth="1.3" /></S></WinBtn>
          <WinBtn $w={49} $close><S w={11} h={10}><path d="M1 1L10 9M10 1L1 9" stroke="#fff" strokeWidth="2.6" /></S></WinBtn>
        </WinControls>
      </TitleBar>

      <TabRow>
        <FileTab>Файл</FileTab>
        <ActiveTab>Главная</ActiveTab>
        {TABS.map(([t, w]) => <Tab key={t} $w={w}>{t}</Tab>)}
        <TabEnd>
          <S w={10} h={7}><path d="M1 6L5 2L9 6" fill="none" stroke="#fff" strokeWidth="2" /><path d="M1 6L5 2L9 6" fill="none" stroke="#444" strokeWidth=".8" /></S>
          <S w={18} h={18}><circle cx="9" cy="9" r="8.5" fill="#3a78d0" stroke="#a9c3e8" /><text x="9" y="14" textAnchor="middle" fontFamily="Liberation Sans" fontWeight="700" fontSize="13" fill="#fff">?</text></S>
        </TabEnd>
      </TabRow>

      <Ribbon>
        <Group $w={190}>
          <GroupBody $top={1}>
            <PasteCol>
              <PasteIcon />
              <PasteText>Вставить</PasteText>
              <Caret />
            </PasteCol>
            <ClipCol>
              <ActionRow $off><ActionIcon $w={20}><ScissorsIcon /></ActionIcon>Вырезать</ActionRow>
              <ActionRow $off><ActionIcon $w={20}><CopyIcon /></ActionIcon>Копировать</ActionRow>
              <ActionRow><ActionIcon $w={20}><BrushIcon /></ActionIcon>Формат по образцу</ActionRow>
            </ClipCol>
          </GroupBody>
          <GroupLabel><GroupTitle>Буфер обмена</GroupTitle><Launch /></GroupLabel>
        </Group>

        <Group $w={269}>
          <GroupBody $top={10} $left={5}>
            <RowStack>
              <ToolRow>
                <FontBox $w={85}><span>Times New Rc</span><Caret /></FontBox>
                <FontBox $w={54}><span>14</span><Caret /></FontBox>
                <Tool $w={22}><BiggerA up /></Tool>
                <Tool $w={21}><BiggerA /></Tool>
                <ToolSep $w={14} />
                <Tool $w={24}><Serif $s={15}>Аа</Serif></Tool>
                <Tool $w={6}><Caret /></Tool>
                <ToolSep $w={8} />
                <Tool $w={26}><ClearIcon /></Tool>
              </ToolRow>
              <ToolRow $left={2}>
                <Tool $w={20}><Serif $s={14}>Ж</Serif></Tool>
                <Tool $w={24}><Serif $s={14} $i>К</Serif></Tool>
                <Tool $w={26}><Serif $s={14} $u>Ч</Serif></Tool>
                <Tool $w={8}><Caret /></Tool>
                <Tool $w={30}><Strike>abc</Strike></Tool>
                <Tool $w={22}><Mini>x<MiniIdx>2</MiniIdx></Mini></Tool>
                <Tool $w={20}><Mini>x<MiniIdx $up>2</MiniIdx></Mini></Tool>
                <ToolSep $w={8} />
                <Tool $w={22}><EffectA /></Tool>
                <Tool $w={6}><Caret /></Tool>
                <Tool $w={28}><HighlightIcon /></Tool>
                <Tool $w={6}><Caret /></Tool>
                <Tool $w={28}><ColorA /></Tool>
                <Tool $w={6}><Caret /></Tool>
              </ToolRow>
            </RowStack>
          </GroupBody>
          <GroupLabel><GroupTitle>Шрифт</GroupTitle><Launch /></GroupLabel>
        </Group>

        <Group $w={227}>
          <GroupBody $top={10} $left={5}>
            <RowStack>
              <ToolRow>
                <Tool $w={24}><BulletsIcon /></Tool>
                <Tool $w={8}><Caret /></Tool>
                <SplitTool><SplitMain><NumberedIcon /></SplitMain><SplitArrow><Caret /></SplitArrow></SplitTool>
                <Tool $w={20}><MultiIcon /></Tool>
                <Tool $w={8}><Caret /></Tool>
                <ToolSep $w={12} />
                <Tool $w={22}><IndentIcon /></Tool>
                <Tool $w={22}><IndentIcon more /></Tool>
                <ToolSep $w={10} />
                <Tool $w={20}><SortIcon /></Tool>
                <ToolSep $w={16} />
                <Tool $w={16}><Serif $s={20} $w={700}>¶</Serif></Tool>
              </ToolRow>
              <ToolRow>
                <Tool $w={23} $on><AlignIcon k="l" /></Tool>
                <Tool $w={24}><AlignIcon k="c" /></Tool>
                <Tool $w={24}><AlignIcon k="r" /></Tool>
                <Tool $w={23}><AlignIcon k="j" /></Tool>
                <ToolSep $w={8} />
                <Tool $w={20}><SpacingIcon /></Tool>
                <Tool $w={8}><Caret /></Tool>
                <ToolSep $w={16} />
                <Tool $w={20}><ShadeIcon /></Tool>
                <Tool $w={8}><Caret /></Tool>
                <Tool $w={26}><BordersIcon /></Tool>
                <Tool $w={8}><Caret /></Tool>
              </ToolRow>
            </RowStack>
          </GroupBody>
          <GroupLabel><GroupTitle>Абзац</GroupTitle><Launch /></GroupLabel>
        </Group>

        <Group $w={447}>
          <GroupBody $top={5}>
            <Gallery>
              <GalleryItem><Sample $s={12} $c="#111" $w={57}>АаБбВвГг,</Sample><SampleLabel>¶ Обычный</SampleLabel></GalleryItem>
              <GalleryItem><Sample $s={12} $c="#111" $w={59}>АаБбВвГг,</Sample><SampleLabel>¶ Без инте...</SampleLabel></GalleryItem>
              <GalleryItem><Sample $s={18} $c="#365f91" $serif $b $w={59}>АаБбВв</Sample><SampleLabel>Заголово...</SampleLabel></GalleryItem>
              <GalleryItem><Sample $s={16} $c="#4f81bd" $serif $b $w={58}>АаБбВв</Sample><SampleLabel>Заголово...</SampleLabel></GalleryItem>
              <GalleryItem><Sample $s={31} $c="#17365d" $serif $w={57}>АаБ</Sample><SampleLabel>Название</SampleLabel></GalleryItem>
              <GalleryScroll>
                <GalleryBtn $h={19}><Caret $up $faint /></GalleryBtn>
                <GalleryBtn $h={20}><Caret /></GalleryBtn>
                <GalleryBtn $h={18}><S w={8} h={7}><path d="M0 .5H8" stroke="#6c6f73" /><path d="M1 3H7L4 6.5Z" fill="#6c6f73" /></S></GalleryBtn>
              </GalleryScroll>
            </Gallery>
            <ChangeStyles>
              <ChangeIcon />
              <ChangeText>Изменить</ChangeText>
              <ChangeLine>стили <Caret /></ChangeLine>
            </ChangeStyles>
          </GroupBody>
          <GroupLabel><GroupTitle>Стили</GroupTitle><Launch /></GroupLabel>
        </Group>

        <Group $w={95}>
          <GroupBody $top={1} $left={5}>
            <ClipCol>
              <ActionRow><ActionIcon $w={22}><BinocIcon /></ActionIcon>Найти&nbsp;&nbsp;<Caret /></ActionRow>
              <ActionRow><ActionIcon $w={22}><ReplaceIcon /></ActionIcon>Заменить</ActionRow>
              <ActionRow><ActionIcon $w={22}><CursorIcon /></ActionIcon>Выделить&nbsp;<Caret /></ActionRow>
            </ClipCol>
          </GroupBody>
          <GroupLabel><GroupTitle>Редактирование</GroupTitle></GroupLabel>
        </Group>
      </Ribbon>

      <Work>
        <Rail>
          <TabStop><TabStopInner><S w={7} h={7}><path d="M1 0V6H7" fill="none" stroke="#222" strokeWidth="2" /></S></TabStopInner></TabStop>
          <VerticalRuler />
        </Rail>
        <Center>
          <HorizontalRuler />
          <PageRow>
            <Gutter $left $w={64} />
            <Page>
              <Line $ind><Num>1)</Num><span>4 м/<Spell>с</Spell></span></Line>
              <Line $ind><Num>2)</Num><span>2 м/<Spell>с</Spell></span><TextCursor /></Line>
              <Line $ind><Num>3)</Num><span>0,25 м/<Spell>с</Spell></span></Line>
              <Line $ind><Num>4)</Num><span>8 м/<Spell>с</Spell></span></Line>
              <Line><span><b>А5</b> <Spell>По</Spell> графику определите скорость через 4 с после начала движения</span></Line>
              <Graph />
            </Page>
            <Gutter $w={66} />
          </PageRow>
        </Center>
        <ScrollCol>
          <Splitter />
          <ViewRuler><ViewRulerIn><S w={11} h={11}><path d="M1 1H6V6H1Z M5 5H10V10H5Z" fill="#fff" stroke="#666" strokeDasharray="1 1" /></S></ViewRulerIn></ViewRuler>
          <ScrollBtn $h={17}><Arrow /></ScrollBtn>
          <Track>
            <Thumb><S w={8} h={7}><path d="M0 .5H8M0 2.5H8M0 4.5H8M0 6.5H8" stroke="#85898f" /></S></Thumb>
          </Track>
          <ScrollBtn $h={17} $line><Arrow $down /></ScrollBtn>
          <ScrollBtn $h={17}><S w={9} h={9}><path d="M1 .5H8" stroke="#444" /><path d="M4.5 2L8 8H1Z" fill="#444" /></S></ScrollBtn>
          <ScrollBtn $h={17}><S w={9} h={9}><circle cx="4.5" cy="4.5" r="3.5" fill="none" stroke="#555" /></S></ScrollBtn>
          <ScrollBtn $h={17}><S w={9} h={9}><path d="M1 8.5H8" stroke="#444" /><path d="M4.5 7L8 1H1Z" fill="#444" /></S></ScrollBtn>
        </ScrollCol>
      </Work>

      <Status>
        <StatusCell $w={105} $pad={8}>Страница: 2 из 2</StatusCell>
        <StatusCell $w={102} $pad={9}>Число слов: 208</StatusCell>
        <StatusCell $w={148} $pad={9}><SpellIcon /><LangText>русский</LangText></StatusCell>
        <StatusRight>
          <ViewSep />
          <ViewBtn $w={18} $on><ViewIconPage /></ViewBtn>
          <ViewBtn $w={18}><ViewIconBook /></ViewBtn>
          <ViewBtn $w={18}><ViewIconWeb /></ViewBtn>
          <ViewBtn $w={18}><ViewIconOutline /></ViewBtn>
          <ViewBtn $w={20}><ViewIconDraft /></ViewBtn>
          <ZoomText>140%</ZoomText>
          <ZoomCircle />
          <ZoomSlider />
          <ZoomCircle plus />
        </StatusRight>
      </Status>

      <Taskbar>
        <TaskIcon $gap={8} $w={38}><Orb /></TaskIcon>
        <TaskIcon $gap={28} $w={30}><IE /></TaskIcon>
        <TaskIcon $gap={31} $w={33}><FolderIcon /></TaskIcon>
        <TaskIcon $gap={31} $w={26}><Wmp /></TaskIcon>
        <TaskIcon $gap={34} $w={32}><FilmIcon /></TaskIcon>
        <TaskIcon $gap={31} $w={30}><ChromeIcon /></TaskIcon>
        <TaskIcon $gap={35} $w={22}><DocIcon /></TaskIcon>
        <TaskIcon $gap={36} $w={32}><Yandex /></TaskIcon>
        <TaskIcon $gap={31} $w={31}><Viber /></TaskIcon>
        <TaskIcon $gap={31} $w={30}><Opera /></TaskIcon>
        <TaskIcon $gap={32} $w={30}><LockApp /></TaskIcon>
        <ActiveTask><BigWord /></ActiveTask>
        <Tray>
          <TrayLang>RU</TrayLang>
          <TrayIcon $w={22}><TrayArrow /></TrayIcon>
          <TrayIcon $w={26}><FlagTray /></TrayIcon>
          <TrayIcon $w={22}><SignalTray /></TrayIcon>
          <TrayIcon $w={24}><PowerTray /></TrayIcon>
          <Clock>21:43<br />06.11.2021</Clock>
          <ShowDesktop />
        </Tray>
      </Taskbar>
    </Window>
  );
}
